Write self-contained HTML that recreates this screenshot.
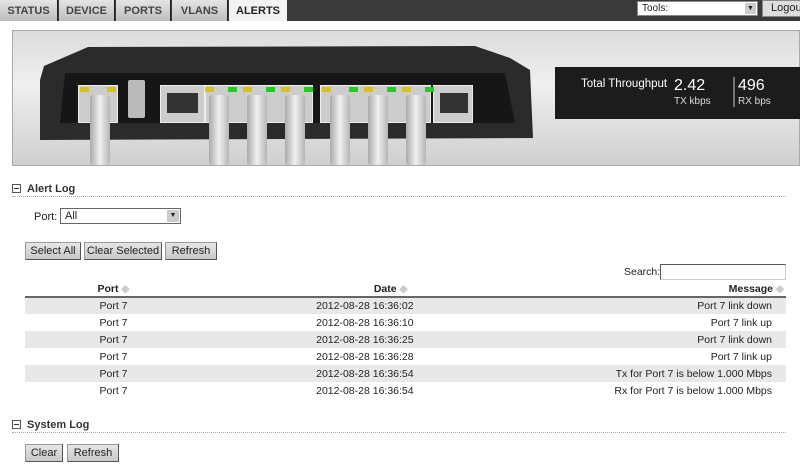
<!DOCTYPE html>
<html><head><style>
*{margin:0;padding:0;box-sizing:border-box}
body{width:800px;height:464px;overflow:hidden;background:#fff;font-family:"Liberation Sans",Arial,sans-serif;font-size:11px;color:#222;position:relative}
.abs{position:absolute}
.top{left:0;top:0;width:800px;height:21px;background:#3a3a3a}
.tab{position:absolute;top:0;height:21px;background:linear-gradient(#e4e4e4,#bdbdbd);color:#444;font-weight:bold;font-size:11px;text-align:center;line-height:22px;border-right:1px solid #222}
.tab.act{background:#f2f2f2;color:#222;border:none}
.btn{position:absolute;height:18px;background:linear-gradient(#e6e6e6,#c8c8c8);border:1px solid #999;border-right-color:#555;border-bottom-color:#555;font-size:11px;line-height:16px;text-align:center;color:#222}
.hdr{position:absolute;left:12px;font-size:11px;font-weight:bold;color:#333}
.hdr i{display:inline-block;width:9px;height:9px;border:1px solid #555;vertical-align:-1px;margin-right:6px;position:relative}
.hdr i:after{content:"";position:absolute;left:1px;top:3px;width:5px;height:1px;background:#333}
.dots{position:absolute;left:12px;width:774px;border-top:1px dotted #aaa}
table{position:absolute;left:25px;top:282px;width:761px;border-collapse:collapse;font-size:10.5px}
th{height:15px;font-weight:bold;border-bottom:2px solid #666;padding:0}
td{height:17px;padding:0}
tr.g td{background:#e8e8e8}
.c1{width:177px;text-align:center}.c2{text-align:right}.c3{text-align:right;padding-right:14px}
.cab{position:absolute;width:20px;background:linear-gradient(90deg,#aaa,#f0f0f0,#b5b5b5);top:95px;height:70px;border-radius:3px}
.port{position:absolute;top:85px;height:38px;background:#ccc;border:1px solid #eee}
.led{position:absolute;top:87px;width:9px;height:5px}
</style></head><body>
<div class="abs top"></div>
<div class="tab" style="left:0;width:58px">STATUS</div>
<div class="tab" style="left:59px;width:56px">DEVICE</div>
<div class="tab" style="left:116px;width:55px">PORTS</div>
<div class="tab" style="left:172px;width:56px">VLANS</div>
<div class="tab act" style="left:229px;width:58px">ALERTS</div>
<div class="abs" style="left:637px;top:1px;width:121px;height:15px;background:#fff;border:1px solid #888;font-size:10px;line-height:13px;padding-left:4px">Tools:<span style="position:absolute;right:1px;top:1px;width:11px;height:11px;background:#ccc;font-size:7px;line-height:11px;text-align:center">▼</span></div>
<div class="abs" style="left:762px;top:0;width:40px;height:17px;background:#ddd;border:1px solid #888;font-size:11px;line-height:15px;padding-left:8px">Logout</div>

<div class="abs" style="left:12px;top:30px;width:788px;height:136px;background:linear-gradient(#dcdcdc,#efefef 40%,#cfcfcf);border:1px solid #aaa"></div>
<svg class="abs" style="left:0;top:0" width="800" height="170">
<path d="M40 80 L44 66 L88 47 L475 46 L510 58 L530 70 L533 138 L40 140 Z" fill="#2b2b2b"/>
<path d="M65 73 L505 73 L515 123 L60 123 Z" fill="#161616"/>
<rect x="555" y="67" width="245" height="52" fill="#1c1c1c"/>
<line x1="734" y1="77" x2="734" y2="107" stroke="#ccc" stroke-width="1"/>
</svg>
<div class="port" style="left:78px;width:40px"></div>
<div class="abs" style="left:128px;top:80px;width:17px;height:38px;background:#bbb;border-radius:2px"></div>
<div class="port" style="left:160px;width:45px"></div>
<div class="port" style="left:205px;width:108px"></div>
<div class="port" style="left:320px;width:111px"></div>
<div class="port" style="left:433px;width:40px"></div>
<div class="abs" style="left:167px;top:93px;width:31px;height:20px;background:#333"></div>
<div class="abs" style="left:440px;top:93px;width:28px;height:20px;background:#333"></div>
<div class="led" style="left:80px;background:#d8c020"></div><div class="led" style="left:107px;background:#d8c020"></div>
<div class="led" style="left:205px;background:#d8c020"></div><div class="led" style="left:228px;background:#2c2"></div>
<div class="led" style="left:243px;background:#d8c020"></div><div class="led" style="left:266px;background:#2c2"></div>
<div class="led" style="left:281px;background:#d8c020"></div><div class="led" style="left:304px;background:#2c2"></div>
<div class="led" style="left:322px;background:#d8c020"></div><div class="led" style="left:349px;background:#2c2"></div>
<div class="led" style="left:364px;background:#d8c020"></div><div class="led" style="left:387px;background:#2c2"></div>
<div class="led" style="left:402px;background:#d8c020"></div><div class="led" style="left:425px;background:#2c2"></div>
<div class="cab" style="left:90px"></div><div class="cab" style="left:209px"></div><div class="cab" style="left:247px"></div><div class="cab" style="left:285px"></div><div class="cab" style="left:330px"></div><div class="cab" style="left:368px"></div><div class="cab" style="left:406px"></div>
<div class="abs" style="left:581px;top:78px;color:#fff;font-size:11.5px">Total Throughput</div>
<div class="abs" style="left:674px;top:77px;color:#fff;font-size:16px">2.42</div>
<div class="abs" style="left:674px;top:96px;color:#ddd;font-size:10px">TX kbps</div>
<div class="abs" style="left:738px;top:77px;color:#fff;font-size:16px">496</div>
<div class="abs" style="left:738px;top:96px;color:#ddd;font-size:10px">RX bps</div>

<div class="hdr" style="top:183px"><i></i>Alert Log</div>
<div class="dots" style="top:196px"></div>
<div class="abs" style="left:34px;top:211px">Port:</div>
<div class="abs" style="left:60px;top:208px;width:121px;height:16px;border:1px solid #666;background:#fff;padding-left:4px;line-height:14px">All<span style="position:absolute;right:1px;top:1px;width:12px;height:12px;background:#ccc;font-size:7px;line-height:12px;text-align:center">▼</span></div>
<div class="btn" style="left:25px;top:242px;width:56px">Select All</div>
<div class="btn" style="left:84px;top:242px;width:78px">Clear Selected</div>
<div class="btn" style="left:165px;top:242px;width:52px">Refresh</div>
<div class="abs" style="left:624px;top:266px;font-size:10.5px">Search:</div>
<div class="abs" style="left:660px;top:264px;width:126px;height:16px;border:1px solid #555;border-bottom-color:#ccc;border-right-color:#ccc;background:#fff"></div>
<table>
<tr><th class="c1">Port <span style="color:#ccc">◆</span></th><th class="c2" style="text-align:right;padding-right:6px">Date <span style="color:#ccc">◆</span></th><th class="c3" style="padding-right:2px">Message <span style="color:#ccc">◆</span></th></tr>
<tr class="g"><td class="c1">Port 7</td><td class="c2">2012-08-28 16:36:02</td><td class="c3">Port 7 link down</td></tr>
<tr><td class="c1">Port 7</td><td class="c2">2012-08-28 16:36:10</td><td class="c3">Port 7 link up</td></tr>
<tr class="g"><td class="c1">Port 7</td><td class="c2">2012-08-28 16:36:25</td><td class="c3">Port 7 link down</td></tr>
<tr><td class="c1">Port 7</td><td class="c2">2012-08-28 16:36:28</td><td class="c3">Port 7 link up</td></tr>
<tr class="g"><td class="c1">Port 7</td><td class="c2">2012-08-28 16:36:54</td><td class="c3">Tx for Port 7 is below 1.000 Mbps</td></tr>
<tr><td class="c1">Port 7</td><td class="c2">2012-08-28 16:36:54</td><td class="c3">Rx for Port 7 is below 1.000 Mbps</td></tr>
</table>
<div class="hdr" style="top:419px"><i></i>System Log</div>
<div class="dots" style="top:432px"></div>
<div class="btn" style="left:25px;top:444px;width:38px">Clear</div>
<div class="btn" style="left:67px;top:444px;width:52px">Refresh</div>
</body></html>
